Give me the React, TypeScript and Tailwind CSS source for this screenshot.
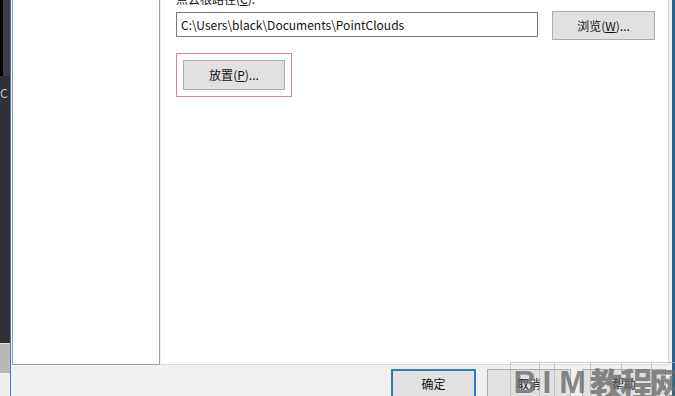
const cjk = { fontFamily: '"Noto Sans CJK SC", "Noto Sans", sans-serif' }

function Btn({ label, hot, className }: { label: string; hot: string; className?: string }) {
  return (
    <div className={`flex items-center justify-center bg-[#e1e1e1] border border-[#adadad] text-[12px] text-[#111] ${className ?? ''}`}>
      <span>
        {label}(<span className="underline">{hot}</span>)...
      </span>
    </div>
  )
}

function Watermark() {
  const chars = [
    { c: 'B', w: 'w-[29px]' },
    { c: 'I', w: 'w-[15px]' },
    { c: 'M', w: 'w-[36px]' },
    { c: '教', w: 'w-[31px]' },
    { c: '程', w: 'w-[30px]' },
    { c: '网', w: 'w-[28px]' },
  ]
  return (
    <div className="absolute left-[510px] top-[362px] flex h-[36px] pointer-events-none">
      {chars.map((ch, i) => (
        <div
          key={i}
          className={`flex items-start justify-center border-l border-t border-[#b4b4b4]/70 h-full text-[32px] leading-[38px] font-black text-[#6a6a6a]/80 ${ch.w}`}
          style={i < 3 ? { fontFamily: '"Liberation Sans", sans-serif' } : undefined}
        >
          {ch.c}
        </div>
      ))}
    </div>
  )
}

export default function App() {
  return (
    <div className="relative flex w-[675px] h-[396px] overflow-hidden bg-[#2c2e33]" style={cjk}>
      {/* background strip on the left */}
      <div className="flex flex-col w-[10px] shrink-0">
        <div className="h-[76px] border-l-[3px] border-black bg-[#3a3c41]" />
        <div className="flex-1 bg-[#2f3136] pt-[10px] text-[12px] leading-[14px] text-[#c8c8c8]">C</div>
        <div className="h-[30px] bg-[#b9b9b9] border-t border-[#dcdcdc]" />
        <div className="h-[23px] bg-[#efefef]" />
      </div>

      {/* dialog */}
      <div className="flex flex-col w-[665px] shrink-0 border-l border-[#3f7fb5] border-r-[3px] border-r-[#2b5f8c] bg-[#f0f0f0]">
        <div className="flex h-[366px] pl-[1px]">
          <div className="w-[148px] h-[365px] bg-white border-l border-r border-b border-[#a0a0a0]" />
          <div className="flex-1 flex flex-col bg-white ml-[1px] border-b border-r border-[#d9d9d9] pl-[15px] mr-[3px]">
            <div className="mt-[-9px] h-[16px] text-[12px] leading-[16px] text-[#111]">
              点云根路径(<span className="underline">C</span>):
            </div>
            <div className="flex items-start mt-[4px]">
              <div className="mt-[1px] w-[362px] h-[25px] flex items-center border border-[#7a7a7a] px-[4px] text-[12px] text-[#111]">
                C:\Users\black\Documents\PointClouds
              </div>
              <Btn label="浏览" hot="W" className="ml-[14px] w-[103px] h-[29px]" />
            </div>
            <div className="mt-[13px] w-[116px] h-[44px] border border-[#d9868c] p-[6px]">
              <Btn label="放置" hot="P" className="w-[102px] h-[30px]" />
            </div>
          </div>
        </div>
        <div className="flex items-start pt-[4px] pl-[380px] gap-[11px]">
          <div className="w-[85px] h-[30px] flex items-center justify-center bg-[#e1e1e1] border-2 border-[#2a7bc0] text-[12px] text-[#111]">
            确定
          </div>
          <div className="w-[84px] h-[30px] flex items-center justify-center bg-[#e1e1e1] border border-[#adadad] text-[12px] text-[#111]">
            取消
          </div>
          <div className="w-[84px] h-[30px] flex items-center justify-center bg-[#e1e1e1] border border-[#adadad] text-[12px] text-[#111]">
            帮助
          </div>
        </div>
      </div>

      <Watermark />
    </div>
  )
}
